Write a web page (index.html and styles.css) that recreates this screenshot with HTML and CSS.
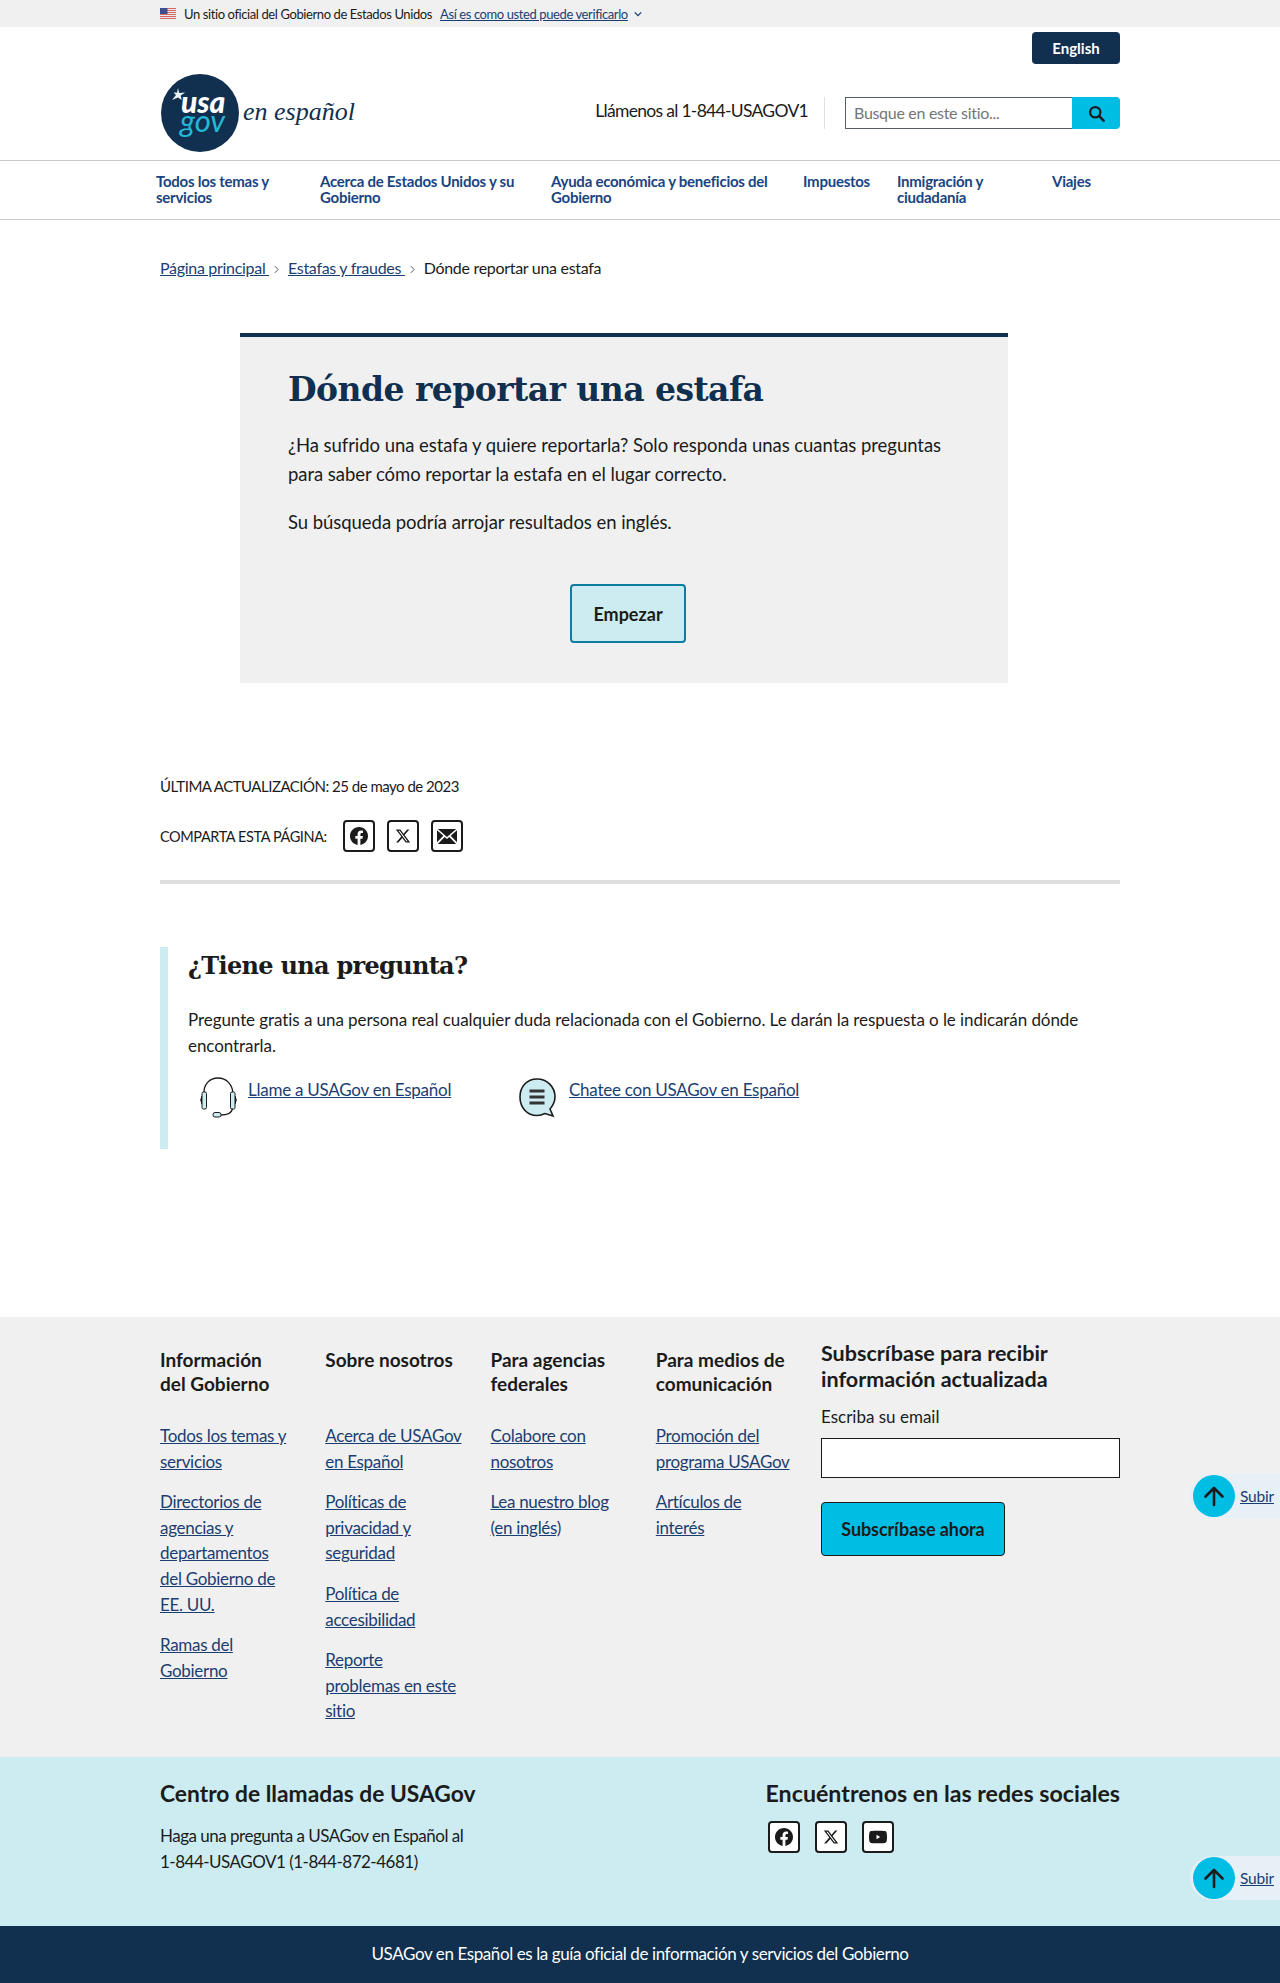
FILE: index.html
```html
<!DOCTYPE html>
<html lang="es">
<head>
    <meta charset="UTF-8">
    <meta name="viewport" content="width=device-width, initial-scale=1.0">
    <title>Dónde reportar una estafa | USAGov</title>
    <link rel="stylesheet" href="styles.css">
</head>
<body>
    <svg class="sprites" width="0" height="0">
        <symbol id="i-fb" viewBox="0 0 24 24"><path d="M24 12.073c0-6.627-5.373-12-12-12s-12 5.373-12 12c0 5.990 4.388 10.954 10.125 11.854v-8.385H7.078v-3.470h3.047V9.430c0-3.007 1.792-4.669 4.533-4.669 1.312 0 2.686.235 2.686.235v2.953H15.830c-1.491 0-1.956.925-1.956 1.874v2.250h3.328l-.532 3.470h-2.796v8.385C19.612 23.027 24 18.062 24 12.073z"/></symbol>
        <symbol id="i-x" viewBox="0 0 24 24"><path d="M18.244 2.250h3.308l-7.227 8.260 8.502 11.240H16.170l-5.214-6.817L4.990 21.750H1.680l7.730-8.835L1.254 2.250H8.080l4.713 6.231zm-1.161 17.520h1.833L7.084 4.126H5.117z"/></symbol>
        <symbol id="i-yt" viewBox="0 0 24 24"><path d="M23.500 6.200a3 3 0 0 0-2.100-2.100C19.500 3.600 12 3.600 12 3.600s-7.500 0-9.400.5A3 3 0 0 0 .5 6.200 31 31 0 0 0 0 12a31 31 0 0 0 .5 5.800 3 3 0 0 0 2.100 2.100c1.900.5 9.400.5 9.400.5s7.500 0 9.400-.5a3 3 0 0 0 2.100-2.100A31 31 0 0 0 24 12a31 31 0 0 0-.5-5.800zM10 15V9l5 3z"/></symbol>
        <symbol id="i-mail" viewBox="0 0 24 18"><path d="M1 0h22L12 9.500zM0 1.500l7.600 6.600L0 16zM24 1.500v14.500l-7.600-7.900zM1 18l8.200-8.500L12 12l2.800-2.500L23 18z"/></symbol>
        <symbol id="i-up" viewBox="0 0 24 24"><path d="M12 21V4M3.500 12.500 12 4l8.500 8.500" fill="none" stroke="currentColor" stroke-width="2.600" stroke-linecap="round" stroke-linejoin="round"/></symbol>
    </svg>

    <div class="banner">
        <div class="wrap banner-row">
            <svg class="flag" viewBox="0 0 16 11" width="16" height="11">
                <rect width="16" height="11" fill="#e8e8f0"/>
                <path d="M0 .5h16M0 2.500h16M0 4.500h16M0 6.500h16M0 8.500h16M0 10.500h16" stroke="#d9695f" stroke-width="1"/>
                <rect width="7.500" height="6" fill="#3d4f8f"/>
            </svg>
            <span class="banner-text">Un sitio oficial del Gobierno de Estados Unidos</span>
            <a href="#" class="banner-link">Así es como usted puede verificarlo</a>
            <svg class="chev" viewBox="0 0 10 6" width="8" height="6"><path d="M1 1l4 4 4-4" fill="none" stroke="#1b3e72" stroke-width="1.600"/></svg>
        </div>
    </div>

    <header class="wrap head">
        <div class="lang-row"><a href="#" class="lang">English</a></div>
        <div class="head-row">
            <a href="#" class="logo">
                <svg viewBox="0 0 78 78" width="78" height="78">
                    <circle cx="39" cy="39" r="39" fill="#112f4e"/>
                    <path d="M17 14l1.200 5 6-.5-4.500 3 1 4.500-3.700-2.500-6 2.500 4-5-2.500-2.500 3.500.2z" fill="#e6f6f9"/>
                    <text class="logo-word"><tspan x="20" y="39" class="logo-usa">usa</tspan><tspan x="19" y="58" class="logo-gov">gov</tspan></text>
                </svg>
                <span class="logo-script">en español</span>
            </a>
            <div class="head-tools">
                <span class="phone">Llámenos al 1-844-USAGOV1</span>
                <form class="search">
                    <input type="text" class="search-input" placeholder="Busque en este sitio...">
                    <button type="button" class="search-btn" aria-label="Buscar">
                        <svg viewBox="0 0 16 16" width="17" height="17"><circle cx="6.800" cy="6.800" r="4.800" fill="none" stroke="#1b1b1b" stroke-width="2.200"/><path d="M10.500 10.500l4.200 4.200" stroke="#1b1b1b" stroke-width="2.400" stroke-linecap="round"/></svg>
                    </button>
                </form>
            </div>
        </div>
    </header>

    <nav class="nav">
        <div class="wrap nav-row">
            <a href="#" class="n1">Todos los temas y servicios</a>
            <a href="#" class="n2">Acerca de Estados Unidos y su Gobierno</a>
            <a href="#" class="n3">Ayuda económica y beneficios del Gobierno</a>
            <a href="#" class="n4">Impuestos</a>
            <a href="#" class="n5">Inmigración y ciudadanía</a>
            <a href="#" class="n6">Viajes</a>
        </div>
    </nav>

    <main class="wrap">
        <div class="crumbs">
            <a href="#">Página principal </a><svg class="sep" viewBox="0 0 6 10" width="5" height="9"><path d="M1 1l4 4-4 4" fill="none" stroke="#555" stroke-width="1.200"/></svg>
            <a href="#">Estafas y fraudes </a><svg class="sep" viewBox="0 0 6 10" width="5" height="9"><path d="M1 1l4 4-4 4" fill="none" stroke="#555" stroke-width="1.200"/></svg>
            <span>Dónde reportar una estafa</span>
        </div>

        <section class="card">
            <h1>Dónde reportar una estafa</h1>
            <p>¿Ha sufrido una estafa y quiere reportarla? Solo responda unas cuantas preguntas para saber cómo reportar la estafa en el lugar correcto.</p>
            <p>Su búsqueda podría arrojar resultados en inglés.</p>
            <div class="card-action"><a href="#" class="start">Empezar</a></div>
        </section>

        <div class="updated">ÚLTIMA ACTUALIZACIÓN: 25 de mayo de 2023</div>
        <div class="share">
            <span>COMPARTA ESTA PÁGINA:</span>
            <a href="#" class="social"><svg width="18" height="18"><use href="#i-fb"/></svg></a>
            <a href="#" class="social"><svg width="16" height="16"><use href="#i-x"/></svg></a>
            <a href="#" class="social"><svg width="20" height="15"><use href="#i-mail"/></svg></a>
        </div>

        <section class="ask">
            <h2>¿Tiene una pregunta?</h2>
            <p>Pregunte gratis a una persona real cualquier duda relacionada con el Gobierno. Le darán la respuesta o le indicarán dónde encontrarla.</p>
            <div class="ask-links">
                <div class="ask-link call">
                    <svg viewBox="0 0 42 42" width="42" height="42">
                        <path d="M7 18C6 7 13 1 21 1s15 6 15 17" fill="none" stroke="#1b1b1b" stroke-width="1.300"/>
                        <path d="M5 19q-2.500 4 0 8zM38 19q2.500 4 0 8z" fill="#1b1b1b" stroke="#1b1b1b"/>
                        <rect x="5" y="15" width="4.500" height="17" rx="1.500" fill="#ccecf2" stroke="#1b1b1b"/>
                        <rect x="33.500" y="15" width="4.500" height="17" rx="1.500" fill="#ccecf2" stroke="#1b1b1b"/>
                        <path d="M35.500 32c-1 4-6 6-11.500 6" fill="none" stroke="#1b1b1b" stroke-width="1.300"/>
                        <rect x="16" y="35.500" width="8" height="4.500" rx="2" fill="#ccecf2" stroke="#1b1b1b"/>
                    </svg>
                    <a href="#">Llame a USAGov en Español</a>
                </div>
                <div class="ask-link chat">
                    <svg viewBox="0 0 42 42" width="42" height="42">
                        <path d="M19 2C9 2 2 9.500 2 20s7 18.500 17 18.500c4 0 6-1 8-2l8 2.500-3-7c3-3.500 5-7 5-12C37 9.500 29 2 19 2z" fill="#ccecf2" stroke="#1b1b1b" stroke-width="1.600"/>
                        <path d="M11.500 14h15M11.500 20h15M11.500 26h15" stroke="#333" stroke-width="2.800"/>
                    </svg>
                    <a href="#">Chatee con USAGov en Español</a>
                </div>
            </div>
        </section>
    </main>

    <footer class="foot">
        <div class="foot-main">
            <div class="wrap foot-grid">
                <div class="foot-col">
                    <h3>Información<br>del Gobierno</h3>
                    <ul>
                        <li><a href="#">Todos los temas y servicios</a></li>
                        <li><a href="#">Directorios de agencias y departamentos<br>del Gobierno de<br>EE. UU.</a></li>
                        <li><a href="#">Ramas del Gobierno</a></li>
                    </ul>
                </div>
                <div class="foot-col">
                    <h3>Sobre nosotros</h3>
                    <ul>
                        <li><a href="#">Acerca de USAGov en Español</a></li>
                        <li><a href="#">Políticas de privacidad y seguridad</a></li>
                        <li><a href="#">Política de accesibilidad</a></li>
                        <li><a href="#">Reporte<br>problemas en este<br>sitio</a></li>
                    </ul>
                </div>
                <div class="foot-col">
                    <h3>Para agencias federales</h3>
                    <ul>
                        <li><a href="#">Colabore con nosotros</a></li>
                        <li><a href="#">Lea nuestro blog (en inglés)</a></li>
                    </ul>
                </div>
                <div class="foot-col">
                    <h3>Para medios de comunicación</h3>
                    <ul>
                        <li><a href="#">Promoción del programa USAGov</a></li>
                        <li><a href="#">Artículos de<br>interés</a></li>
                    </ul>
                </div>
                <div class="subscribe">
                    <h3>Subscríbase para recibir información actualizada</h3>
                    <label class="sub-label" for="email">Escriba su email</label>
                    <input id="email" class="sub-input" type="text">
                    <a href="#" class="sub-btn">Subscríbase ahora</a>
                </div>
            </div>
        </div>

        <div class="foot-contact">
            <div class="wrap contact-row">
                <div>
                    <h3>Centro de llamadas de USAGov</h3>
                    <p>Haga una pregunta a USAGov en Español al<br>1-844-USAGOV1 (1-844-872-4681)</p>
                </div>
                <div class="find">
                    <h3>Encuéntrenos en las redes sociales</h3>
                    <div class="find-icons">
                        <a href="#" class="social"><svg width="18" height="18"><use href="#i-fb"/></svg></a>
                        <a href="#" class="social"><svg width="16" height="16"><use href="#i-x"/></svg></a>
                        <a href="#" class="social"><svg width="18" height="18"><use href="#i-yt"/></svg></a>
                    </div>
                </div>
            </div>
        </div>

        <div class="foot-tag">USAGov en Español es la guía oficial de información y servicios del Gobierno</div>
    </footer>

    <a href="#" class="to-top top-a"><span class="to-top-dot"><svg width="24" height="24"><use href="#i-up"/></svg></span><span class="to-top-txt">Subir</span></a>
    <a href="#" class="to-top top-b"><span class="to-top-dot"><svg width="24" height="24"><use href="#i-up"/></svg></span><span class="to-top-txt">Subir</span></a>
</body>
</html>
```

FILE: styles.css
```css
* {
    box-sizing: border-box;
}
body {
    margin: 0;
    position: relative;
    font-family: "Lato", "Noto Sans", sans-serif;
    font-size: 17px;
    color: #1b1b1b;
    background: #fff;
}
a {
    color: #1b3e72;
}
.sprites {
    position: absolute;
}
.wrap {
    width: 960px;
    margin: 0 auto;
}

/* top banner */
.banner {
    height: 27px;
    background: #f0f0f0;
    font-size: 13px;
    letter-spacing: -0.4px;
}
.banner-row {
    display: flex;
    align-items: center;
    height: 100%;
}
.flag {
    margin-right: 8px;
}
.banner-link {
    margin-left: 8px;
}
.chev {
    margin-left: 6px;
}

/* header */
.head {
    height: 133px;
}
.lang-row {
    display: flex;
    justify-content: flex-end;
    padding-top: 5px;
}
.lang {
    width: 88px;
    height: 32px;
    display: flex;
    align-items: center;
    justify-content: center;
    background: #112f4e;
    color: #fff;
    font-size: 15px;
    font-weight: 700;
    text-decoration: none;
    border-radius: 4px;
}
.head-row {
    display: flex;
    justify-content: space-between;
    margin-top: 10px;
}
.logo {
    display: flex;
    align-items: center;
    text-decoration: none;
    margin-left: 1px;
}
.logo-word {
    font-family: "Lato", sans-serif;
    font-style: italic;
}
.logo-usa {
    font-size: 30px;
    font-weight: 900;
    fill: #fff;
}
.logo-gov {
    font-size: 31px;
    fill: #22b8d8;
}
.logo-script {
    font-family: "Liberation Serif", serif;
    font-style: italic;
    font-size: 26px;
    color: #112f4e;
    margin-left: 4px;
    margin-top: -2px;
}
.head-tools {
    display: flex;
    align-items: flex-start;
    padding-top: 23px;
}
.phone {
    font-size: 17.500px;
    letter-spacing: -0.7px;
    line-height: 28px;
    padding: 0 16px 4px 0;
    margin-right: 20px;
    border-right: 1px solid #dfe1e2;
}
.search {
    display: flex;
    margin: 0;
}
.search-input {
    width: 227px;
    height: 32px;
    border: 1px solid #565c65;
    border-right: 0;
    padding: 0 8px 2px;
    font-family: inherit;
    font-size: 16px;
    letter-spacing: -0.3px;
}
.search-input::placeholder {
    color: #71767a;
}
.search-btn {
    width: 48px;
    height: 32px;
    border: 0;
    padding: 0;
    background: #00bde3;
    border-radius: 0 4px 4px 0;
    display: flex;
    align-items: center;
    justify-content: center;
}

/* main nav */
.nav {
    height: 60px;
    border-top: 1px solid #c9c9c9;
    border-bottom: 1px solid #c9c9c9;
}
.nav-row {
    display: flex;
    padding-top: 12px;
}
.nav-row a {
    font-size: 15px;
    letter-spacing: -0.25px;
    line-height: 16px;
    font-weight: 700;
    text-decoration: none;
    color: #1a4480;
}
.n1 { margin-left: -4px; width: 164px; padding-right: 30px; }
.n2 { width: 231px; padding-right: 20px; }
.n3 { width: 252px; padding-right: 20px; }
.n4 { width: 94px; }
.n5 { width: 155px; padding-right: 60px; }

/* breadcrumb */
.crumbs {
    padding-top: 37px;
    font-size: 16px;
    letter-spacing: -0.3px;
    line-height: 22px;
}
.crumbs .sep {
    margin: 0 5px;
}

/* card */
.card {
    width: 768px;
    margin: 54px 0 0 80px;
    height: 350px;
    padding: 29px 48px 0;
    background: #f0f0f0;
    border-top: 4px solid #112f4e;
}
.card h1 {
    margin: 0 0 17px;
    font-family: "DejaVu Serif", serif;
    font-size: 33px;
    letter-spacing: -0.55px;
    line-height: 48px;
    font-weight: 700;
    color: #112f4e;
}
.card p {
    margin: 0 0 19px;
    font-size: 18.500px;
    letter-spacing: -0.05px;
    line-height: 29px;
}
.card-action {
    display: flex;
    justify-content: center;
    padding: 28px 0 0 8px;
}
.start {
    width: 116px;
    height: 59px;
    display: flex;
    align-items: center;
    justify-content: center;
    background: #ccecf2;
    border: 2px solid #0d7ea2;
    border-radius: 4px;
    font-size: 18px;
    font-weight: 700;
    color: #1b1b1b;
    text-decoration: none;
}

/* update + share */
.updated {
    margin-top: 91px;
    font-size: 15px;
    letter-spacing: -0.5px;
    line-height: 24px;
}
.share {
    display: flex;
    align-items: center;
    margin-top: 22px;
    padding-bottom: 28px;
    border-bottom: 4px solid #dfdfdf;
    font-size: 14.500px;
    letter-spacing: -0.4px;
}
.share span {
    width: 183px;
    white-space: nowrap;
}
.social {
    width: 32px;
    height: 32px;
    margin-right: 12px;
    display: flex;
    align-items: center;
    justify-content: center;
    background: #fff;
    border: 2px solid #1b1b1b;
    border-radius: 4px;
}
.social svg {
    fill: #1b1b1b;
}

/* question box */
.ask {
    margin-top: 63px;
    height: 202px;
    padding: 1px 0 0 20px;
    border-left: 8px solid #ccecf2;
}
.ask h2 {
    margin: 0 0 23px;
    font-family: "DejaVu Serif", serif;
    font-size: 24px;
    letter-spacing: -0.7px;
    line-height: 36px;
    font-weight: 700;
}
.ask p {
    margin: 0 0 18px;
    font-size: 17px;
    letter-spacing: -0.07px;
    line-height: 26px;
}
.ask-links {
    display: flex;
    padding-left: 9px;
}
.ask-link {
    display: flex;
    align-items: flex-start;
    font-size: 17px;
    letter-spacing: -0.25px;
    line-height: 26px;
}
.ask-link svg {
    margin-right: 9px;
}
.call {
    width: 321px;
}

/* footer */
.foot {
    margin-top: 168px;
}
.foot-main {
    height: 440px;
    background: #f0f0f0;
    padding-top: 31px;
}
.foot-grid {
    display: grid;
    grid-template-columns: repeat(4, 165.250px) 299px;
}
.foot h3 {
    margin: 0;
    font-size: 19px;
    line-height: 24px;
    font-weight: 700;
}
.foot-col {
    padding-right: 20px;
}
.foot-col h3 {
    min-height: 48px;
    margin-bottom: 27px;
}
.foot-col ul {
    list-style: none;
    margin: 0;
    padding: 0;
}
.foot-col li {
    margin-bottom: 15px;
    font-size: 17px;
    letter-spacing: -0.3px;
    line-height: 25.600px;
}
.foot-col li a {
    display: block;
    max-width: 140px;
}
.subscribe {
    margin-top: -8px;
}
.subscribe h3 {
    font-size: 21.500px;
    line-height: 26px;
}
.sub-label {
    display: block;
    margin-top: 13px;
    line-height: 24px;
}
.sub-input {
    display: block;
    width: 299px;
    height: 40px;
    margin-top: 9px;
    border: 1px solid #1b1b1b;
    background: #fff;
}
.sub-btn {
    width: 184px;
    height: 54px;
    margin-top: 24px;
    display: flex;
    align-items: center;
    justify-content: center;
    background: #00bde3;
    border: 1px solid #1b1b1b;
    border-radius: 4px;
    color: #1b1b1b;
    font-size: 18px;
    letter-spacing: -0.1px;
    font-weight: 700;
    text-decoration: none;
}
.foot-contact {
    height: 169px;
    background: #ccecf2;
    padding-top: 22px;
}
.contact-row {
    display: flex;
    justify-content: space-between;
}
.foot-contact h3 {
    font-size: 22.800px;
    line-height: 28px;
}
.find h3 {
    font-size: 23.200px;
}
.foot-contact p {
    margin: 16px 0 0;
    font-size: 17px;
    letter-spacing: -0.5px;
    line-height: 26px;
}
.find-icons {
    display: flex;
    gap: 15px;
    margin-top: 14px;
    padding-left: 2px;
}
.find-icons .social {
    margin: 0;
}
.foot-tag {
    height: 57px;
    padding-bottom: 2px;
    display: flex;
    align-items: center;
    justify-content: center;
    background: #112f4e;
    color: #fff;
    font-size: 17px;
    letter-spacing: -0.4px;
}

/* back to top, floats over the page */
.to-top {
    position: absolute;
    left: 1190px;
    width: 90px;
    height: 44px;
    padding-left: 3px;
    display: flex;
    align-items: center;
    background: #e7eff7;
    border-radius: 24px 0 0 24px;
}
.top-a { top: 1474px; }
.top-b { top: 1856px; }
.to-top-dot {
    width: 42px;
    height: 42px;
    flex: none;
    display: flex;
    align-items: center;
    justify-content: center;
    border-radius: 50%;
    background: #00bde3;
    color: #1b1b1b;
}
.to-top-txt {
    margin-left: 5px;
    font-size: 15.500px;
    letter-spacing: -0.2px;
    text-decoration: underline;
}
```
